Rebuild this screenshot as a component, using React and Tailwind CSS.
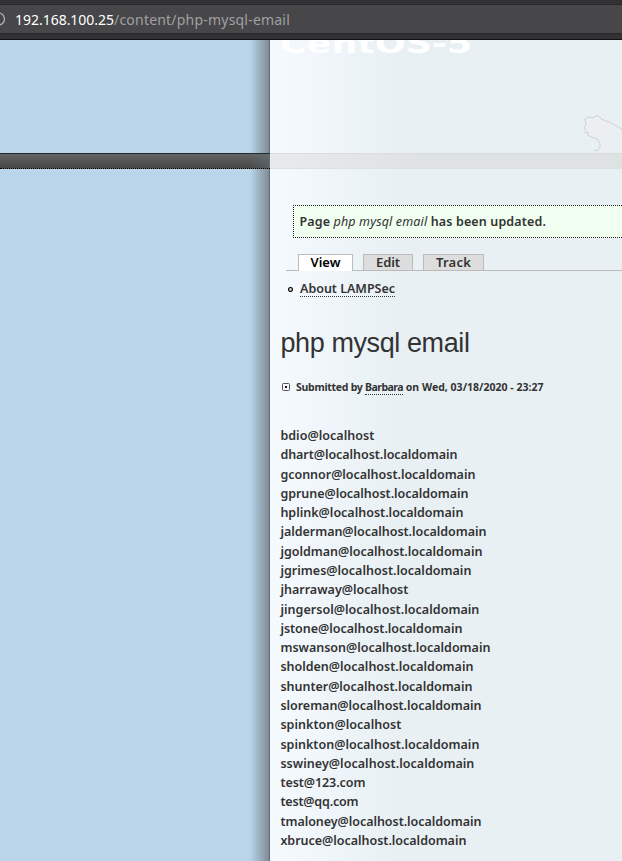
const users = [
  ['bdio@localhost', 94],
  ['dhart@localhost.localdomain', 177],
  ['gconnor@localhost.localdomain', 195],
  ['gprune@localhost.localdomain', 188],
  ['hplink@localhost.localdomain', 183],
  ['jalderman@localhost.localdomain', 206],
  ['jgoldman@localhost.localdomain', 202],
  ['jgrimes@localhost.localdomain', 191],
  ['jharraway@localhost', 128],
  ['jingersol@localhost.localdomain', 199],
  ['jstone@localhost.localdomain', 182],
  ['mswanson@localhost.localdomain', 210],
  ['sholden@localhost.localdomain', 193],
  ['shunter@localhost.localdomain', 192],
  ['sloreman@localhost.localdomain', 201],
  ['spinkton@localhost', 121],
  ['spinkton@localhost.localdomain', 199],
  ['sswiney@localhost.localdomain', 194],
  ['test@123.com', 85],
  ['test@qq.com', 78],
  ['tmaloney@localhost.localdomain', 201],
  ['xbruce@localhost.localdomain', 186],
];

// Spreads the letters of a line evenly so that it fills the given width.
function Fit({ width, className = '', children }) {
  const fit = (el) => {
    if (!el) return;
    el.style.letterSpacing = '0px';
    const natural = el.getBoundingClientRect().width;
    el.style.letterSpacing = `${(width - natural) / el.textContent.length}px`;
  };
  return (
    <span ref={fit} className={`inline-block whitespace-pre ${className}`}>
      {children}
    </span>
  );
}

function AddressBar() {
  return (
    <header className="flex h-10 shrink-0 flex-col border-b border-[#111113] bg-[#323234] pt-1">
      <div className="flex h-[30px] items-center border-y border-[#29292b] bg-[#474749] font-['Noto_Sans',sans-serif] text-[14px]">
        <svg className="h-[14px] w-[15px] shrink-0" viewBox="0 0 15 14" fill="none">
          <circle cx="-1.5" cy="7" r="6" stroke="#b1b1b3" strokeWidth="1.3" />
        </svg>
        <Fit width={99} className="text-white">192.168.100.25</Fit>
        <Fit width={176} className="text-[#a0a0a2]">/content/php-mysql-email</Fit>
      </div>
    </header>
  );
}

function Sidebar({ className }) {
  return (
    <div className={`flex w-[270px] shrink-0 justify-end ${className}`}>
      <div className="w-5 border-r border-[#626c74] bg-linear-to-r from-[#7f8c97]/0 to-[#7f8c97]" />
    </div>
  );
}

function Masthead() {
  return (
    <div className="flex h-[113px] shrink-0">
      <Sidebar className="bg-[#bad5e9]" />
      <div className="relative grow overflow-hidden">
        <div className="absolute -top-[18px] left-[10px] origin-left scale-x-[1.4] font-['DejaVu_Sans',sans-serif] text-[26px] leading-[44px] font-bold whitespace-nowrap text-white">
          CentOS-5
        </div>
        <svg className="absolute top-[74px] right-0 h-[39px] w-10" viewBox="0 0 40 39" fill="none">
          <path d="M3 20 2 13 4 10 3 5 6 3 12 4 14 2 17 2 20 5 40 15V39H12L18 34 18 28 15 25 4 21Z" fill="#ebeff2" />
          <path d="M4 17 2 13 4 11 3 5 6 3 11 4 14 2 17 2 19 5 27 8 40 15M2 18 7 19 5 21 15 25 18 29 18 34 15 37 12 36" stroke="#cbd1d5" strokeWidth="1" />
        </svg>
      </div>
    </div>
  );
}

function Divider() {
  return (
    <div className="flex h-4 shrink-0">
      <div className="flex w-[270px] shrink-0 justify-end border-t border-b border-t-[#202c33] border-b-black [border-bottom-style:dotted] bg-linear-to-b from-[#646565] to-[#464646]">
        <div className="w-5 border-r border-[#626c74] bg-linear-to-r from-[#626c74]/0 to-[#626c74]/60" />
      </div>
      <div className="grow border-y border-t-[#d9dddf] border-b-[#dce1e2] bg-linear-to-r from-[#e8eaec] to-[#dfe2e3] to-[150px]" />
    </div>
  );
}

function Tabs() {
  return (
    <nav className="ml-4 flex h-[17px] border-b border-[#bbb] pl-3 text-[13px] leading-[14px]">
      <span className="mr-[10px] h-[17px] w-[55px] border border-b-0 border-[#bbb] bg-white text-center text-black"><Fit width={30}>View</Fit></span>
      <span className="mr-[10px] h-4 w-[50px] border border-b-0 border-[#bbb] bg-[#ddd] text-center"><Fit width={24}>Edit</Fit></span>
      <span className="h-4 w-[61px] border border-b-0 border-[#bbb] bg-[#ddd] text-center"><Fit width={35}>Track</Fit></span>
    </nav>
  );
}

function Article() {
  return (
    <main className="flex min-w-0 grow flex-col overflow-hidden pt-9 font-['Noto_Sans',sans-serif] text-[12.5px] font-semibold text-[#333]">
      <div className="ml-[23px] h-[33px] border border-r-0 border-dotted border-[#222] bg-[#f0fff0] pl-[5.5px] leading-[31px]">
        <Fit width={246.5}>Page <em className="font-normal">php mysql email</em> has been updated.</Fit>
      </div>
      <div className="h-4" />
      <Tabs />
      <div className="ml-[18px] flex h-[26px] items-start pt-[9px]">
        <svg className="mt-[7px] mr-[7px] h-[5px] w-[5px]" viewBox="0 0 5 5">
          <circle cx="2.5" cy="2.5" r="2" fill="#ccc" stroke="#111" strokeWidth="1.2" />
        </svg>
        <Fit width={95} className="h-[17px] border-b border-dotted border-[#333] leading-[18px]">About LAMPSec</Fit>
      </div>
      <h1 className="mt-[28px] ml-[10.5px] font-['Liberation_Sans',sans-serif] text-[27px] leading-[36px] font-normal">
        <Fit width={189}>php mysql email</Fit>
      </h1>
      <div className="mt-[16px] ml-3 flex h-5 items-center text-[10.5px] leading-[13px] font-bold">
        <svg className="mr-[6px] h-2 w-2" viewBox="0 0 8 8">
          <rect x=".5" y=".5" width="7" height="7" rx="1" fill="#f5f7f8" stroke="#555" />
          <rect x="3" y="3" width="2" height="2" fill="#111" />
        </svg>
        <Fit width={69}>{'Submitted by '}</Fit>
        <Fit width={38} className="border-b border-dotted border-[#333] pt-px">Barbara</Fit>
        <Fit width={140.5}>{' on Wed, 03/18/2020 - 23:27'}</Fit>
      </div>
      <div className="mt-[29px] ml-[10.4px]">
        {users.map(([address, width]) => (
          <div key={address} className="h-[19.29px] leading-[19.29px]">
            <Fit width={width}>{address}</Fit>
          </div>
        ))}
      </div>
    </main>
  );
}

export default function App() {
  return (
    <div className="flex h-[861px] w-[622px] flex-col overflow-hidden">
      <AddressBar />
      <div className="flex min-h-0 grow flex-col bg-linear-to-r from-[#f5faff] from-[270px] to-[#e8f0f4] to-[400px]">
        <Masthead />
        <Divider />
        <div className="flex min-h-0 grow">
          <Sidebar className="bg-[#bad5e9]" />
          <Article />
        </div>
      </div>
    </div>
  );
}
